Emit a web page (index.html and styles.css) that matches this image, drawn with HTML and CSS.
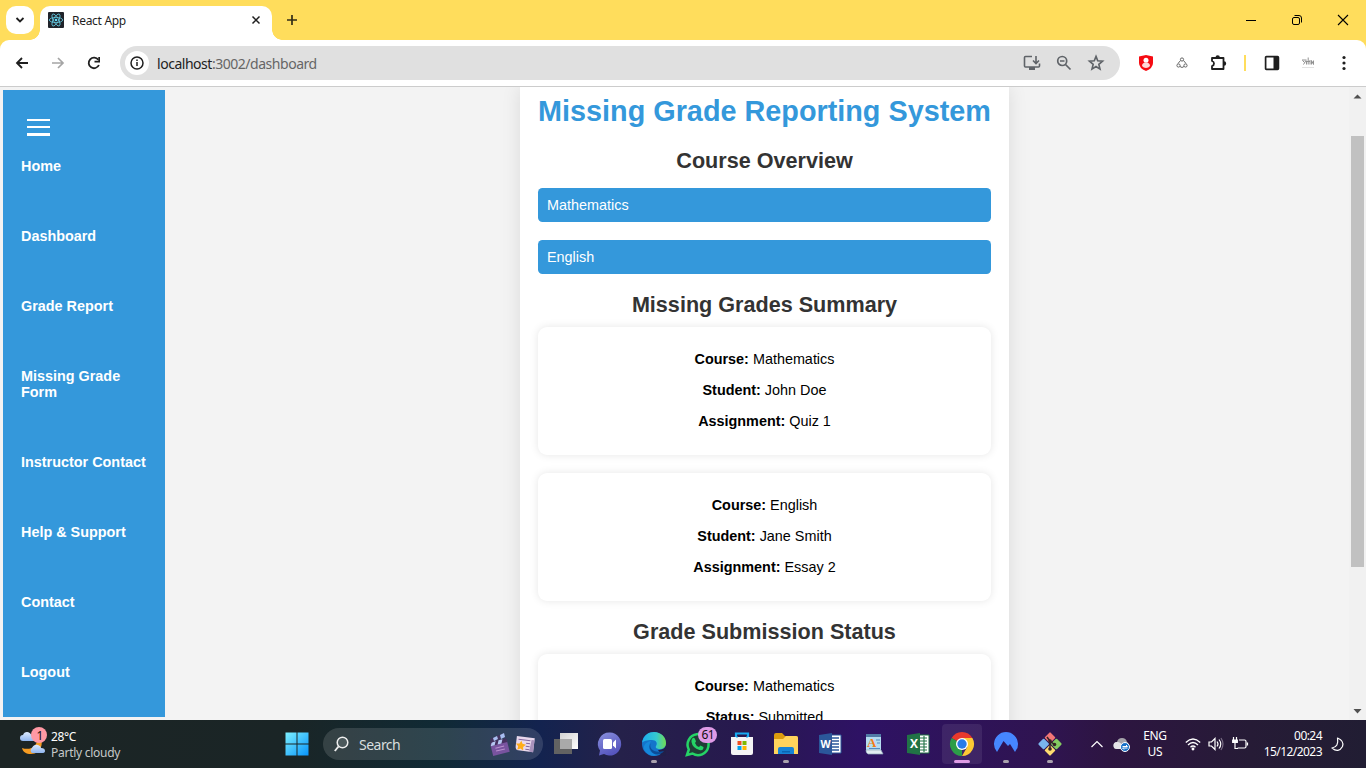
FILE: index.html
```html
<!DOCTYPE html>
<html lang="en">
<head>
<meta charset="utf-8">
<title>React App</title>
<link rel="stylesheet" href="styles.css">
</head>
<body>
<header class="tabstrip">
  <button class="tab-search"><svg width="10" height="10" viewBox="0 0 10 10"><path d="M1.500 3 5 6.500 8.500 3" fill="none" stroke="#1f1f1f" stroke-width="1.800"/></svg></button>
  <div class="tab">
    <svg class="favicon" width="16" height="16" viewBox="0 0 16 16"><rect width="16" height="16" rx="1" fill="#20232a"/><g fill="none" stroke="#61c5dc" stroke-width=".85"><ellipse cx="8" cy="8" rx="6.700" ry="2.600"/><ellipse cx="8" cy="8" rx="6.700" ry="2.600" transform="rotate(60 8 8)"/><ellipse cx="8" cy="8" rx="6.700" ry="2.600" transform="rotate(120 8 8)"/></g><circle cx="8" cy="8" r="1.300" fill="#61dafb"/></svg>
    <span class="tab-title">React App</span>
    <svg class="tab-close" width="10" height="10" viewBox="0 0 10 10"><path d="M1.500 1.500l7 7M8.500 1.500l-7 7" stroke="#1f1f1f" stroke-width="1.500"/></svg>
  </div>
  <svg class="new-tab" width="12" height="12" viewBox="0 0 12 12"><path d="M6 1v10M1 6h10" stroke="#332d16" stroke-width="1.700"/></svg>
  <div class="window-controls">
    <span><svg width="12" height="12" viewBox="0 0 12 12"><path d="M1 6.500h10" stroke="#000"/></svg></span>
    <span><svg width="12" height="12" viewBox="0 0 12 12" fill="none" stroke="#000"><rect x="1.500" y="3.500" width="7" height="7" rx="1.500"/><path d="M3.500 1.500H8a2.500 2.500 0 0 1 2.500 2.500v4.500"/></svg></span>
    <span><svg width="12" height="12" viewBox="0 0 12 12"><path d="M1 1l10 10M11 1 1 11" stroke="#000" stroke-width="1.100"/></svg></span>
  </div>
</header>

<div class="toolbar-wrap"><nav class="toolbar">
  <span class="slot"><svg width="16" height="16" viewBox="0 0 16 16"><path d="M14 8H3M8 3 3 8l5 5" fill="none" stroke="#1f1f1f" stroke-width="1.800"/></svg></span>
  <span class="slot"><svg width="16" height="16" viewBox="0 0 16 16"><path d="M2 8h11M8 3l5 5-5 5" fill="none" stroke="#a5a5a5" stroke-width="1.700"/></svg></span>
  <span class="slot"><svg width="16" height="16" viewBox="0 0 16 16"><path d="M12.900 10A5.300 5.300 0 1 1 12.300 4.800" fill="none" stroke="#1f1f1f" stroke-width="1.800"/><path d="M14 2v5.500H8.500V5.800h3.800V2z" fill="#1f1f1f"/></svg></span>
  <div class="omnibox">
    <span class="site-info"><svg width="16" height="16" viewBox="0 0 16 16"><circle cx="8" cy="8" r="6" fill="none" stroke="#1f1f1f" stroke-width="1.500"/><path d="M8 7v4M8 4.500v1.500" stroke="#1f1f1f" stroke-width="1.500"/></svg></span>
    <span class="url"><b>localhost</b>:3002/dashboard</span>
    <span class="omni-icon"><svg width="18" height="16" viewBox="0 0 18 16"><path d="M9 1.500H2.500Q1.500 1.500 1.500 2.500v8.500q0 1 1 1h13q1 0 1-1V8.500" fill="none" stroke="#5f6368" stroke-width="1.600"/><path d="M6 12h6v3H6z" fill="#5f6368"/><path d="M13 1v7M10 5.500l3 3 3-3" fill="none" stroke="#5f6368" stroke-width="1.600"/></svg></span>
    <span class="omni-icon"><svg width="16" height="16" viewBox="0 0 16 16"><g fill="none" stroke="#5f6368" stroke-width="1.700"><circle cx="6.200" cy="6" r="4.500"/><path d="M4 6h4.500M9.500 9.500l5 5"/></g></svg></span>
    <span class="omni-icon"><svg width="18" height="18" viewBox="0 0 24 24"><path d="M12 3.200l2.300 5.900 6.400.5-4.900 4.200 1.500 6.300-5.300-3.400-5.300 3.400 1.500-6.300-4.900-4.200 6.400-.5z" fill="none" stroke="#5f6368" stroke-width="2.200"/></svg></span>
  </div>
  <span class="slot"><svg width="16" height="18" viewBox="0 0 16 18"><path d="M8 1l7 1.500V9q0 5-7 8-7-3-7-8V2.500z" fill="#f60b12"/><circle cx="8" cy="6.300" r="2.500" fill="#fff"/><path d="M4 12q0-3.500 4-3.500t4 3.500q-1.500 2-4 2t-4-2" fill="#ffd8d8"/></svg></span>
  <span class="slot"><svg width="12" height="12" viewBox="0 0 12 12" fill="none" stroke="#666"><circle cx="6" cy="2.500" r="1.600"/><circle cx="2.500" cy="8.500" r="1.600"/><circle cx="9.500" cy="8.500" r="1.600"/><path d="M4.500 3.500 2 6.500M7.500 3.500l2.500 3M4 9.500Q6 11.500 8 9.500"/></svg></span>
  <span class="slot"><svg width="18" height="18" viewBox="0 0 18 18"><path d="M3 4h11.500v11H3V12Q5 11.500 5 9.500T3 7z" fill="none" stroke="#1f1f1f" stroke-width="1.800" stroke-linejoin="round"/><path d="M6.500 3.500a2.200 2.200 0 0 1 4.400 0zM15 7.300a2.200 2.200 0 0 1 0 4.400z" fill="#1f1f1f"/></svg></span>
  <span class="divider"></span>
  <span class="slot"><svg width="16" height="16" viewBox="0 0 16 16"><rect x="1.600" y="1.600" width="12.800" height="12.800" rx=".8" fill="#fff" stroke="#1f1f1f" stroke-width="1.700"/><path d="M9.500 1.500H14v13H9.500z" fill="#1f1f1f"/></svg></span>
  <span class="slot"><svg width="14" height="12" viewBox="0 0 14 12"><path d="M1 3h4.500M1.500 3.500l2 2M5 3.500 2.500 7.500M5.500 4v3.500M7.200 .5v7M5.500 4.500H9M9 3v4.500M10.500 7.500v-4l2 4v-4" fill="none" stroke="#929292"/><path d="M1 10.500h12" stroke="#e3e3e3"/></svg></span>
  <span class="slot"><svg width="4" height="16" viewBox="0 0 4 16" fill="#1f1f1f"><circle cx="2" cy="2.500" r="1.600"/><circle cx="2" cy="8" r="1.600"/><circle cx="2" cy="13.500" r="1.600"/></svg></span>
</nav></div>

<main class="viewport">
  <aside class="sidebar">
    <div class="hamburger"><i></i><i></i><i></i></div>
    <ul class="menu">
      <li>Home</li><li>Dashboard</li><li>Grade Report</li><li>Missing Grade Form</li><li>Instructor Contact</li><li>Help &amp; Support</li><li>Contact</li><li>Logout</li>
    </ul>
  </aside>
  <div class="page">
    <section class="dashboard">
      <h1>Missing Grade Reporting System</h1>
      <h2>Course Overview</h2>
      <div class="course">Mathematics</div>
      <div class="course">English</div>
      <h2>Missing Grades Summary</h2>
      <div class="card"><p><b>Course:</b> Mathematics</p><p><b>Student:</b> John Doe</p><p><b>Assignment:</b> Quiz 1</p></div>
      <div class="card"><p><b>Course:</b> English</p><p><b>Student:</b> Jane Smith</p><p><b>Assignment:</b> Essay 2</p></div>
      <h2>Grade Submission Status</h2>
      <div class="card"><p><b>Course:</b> Mathematics</p><p><b>Status:</b> Submitted</p></div>
    </section>
  </div>
  <div class="scrollbar">
    <svg width="9" height="5" viewBox="0 0 9 5"><path d="M.5 4.500 4.500.5l4 4z" fill="#505050"/></svg>
    <span class="thumb"></span>
    <svg width="9" height="5" viewBox="0 0 9 5"><path d="M.5 0l4 4.500 4-4.500z" fill="#505050"/></svg>
  </div>
</main>

<footer class="taskbar">
  <div class="weather">
    <svg width="30" height="30" viewBox="0 0 30 30"><defs><linearGradient id="cl" x2="0" y2="1"><stop stop-color="#dceaff"/><stop offset="1" stop-color="#8fb5ef"/></linearGradient></defs><path d="M20 9c7 4 4 18-7 18-5 0-8-2-9-6 9 3 16-2 16-12z" fill="#f69c22"/><path d="M5 14a3 3 0 0 1 0-6q1-3 4-3t5 4q3 1 2 5z" fill="url(#cl)"/><path d="M14 26a3 3 0 0 1 0-5q2-4 6-3 3 1 3 3 4 0 4 3 0 2-3 2z" fill="url(#cl)"/><circle cx="21" cy="8" r="8" fill="#ff99a4"/><text x="18.500" y="12.500" class="badge-text">1</text></svg>
    <div class="weather-text"><span>28°C</span><span class="dim">Partly cloudy</span></div>
  </div>
  <span class="start"><svg width="24" height="24" viewBox="0 0 24 24"><defs><linearGradient id="win" x2="1" y2="1"><stop stop-color="#7df0ff"/><stop offset="1" stop-color="#0794fb"/></linearGradient></defs><path d="M.5.5h11v11H.5zM12.500.5h11v11h-11zM.5 12.500h11v11H.5zM12.500 12.500h11v11h-11z" fill="url(#win)"/></svg></span>
  <div class="search">
    <svg width="16" height="16" viewBox="0 0 16 16"><circle cx="8.500" cy="6.500" r="5.300" fill="#4c595c" stroke="#eee" stroke-width="1.500"/><path d="M4.500 10.500 .8 15" stroke="#eee" stroke-width="1.900"/></svg>
    <span>Search</span>
    <svg class="search-art" width="46" height="24" viewBox="0 0 46 24"><g transform="rotate(-14 11 14)"><path d="M2 10h17v12H2z" fill="#78539f"/><path d="M2 8h17v4H2z" fill="#45305f"/><path d="M4 8h4l-2 4H2zM11 8h4l-2 4H9z" fill="#b6c7f2"/><path d="M6 15h9M6 18h9" stroke="#b990cf"/></g><path d="M1 7 15 1l1 4L2 11z" fill="#44345f"/><path d="M4 6l4-2 1 3-4 2zM11 3l4-2 1 4-4 2z" fill="#a8bff1"/><g transform="rotate(7 35 12)"><path d="M27 5h18v14H30q-3 0-3-4z" fill="#e9d8ed"/><path d="M42 7h3v12h-4z" fill="#a891bb"/><path d="M29 8h12M37 11h4M37 14h4M37 17h4" stroke="#82669e"/><path d="M32 9l1.500 3 3.500.5-2.500 2.500.5 3.500-3-1.500-3 1.500.5-3.500-2.500-2.500 3.500-.5z" fill="#ffad19"/></g></svg>
  </div>
  <div class="apps">
    <span class="app"><svg width="24" height="24" viewBox="0 0 24 24"><defs><linearGradient id="tv" x2="1" y2="1"><stop stop-color="#d2d2d2"/><stop offset="1" stop-color="#fff"/></linearGradient></defs><path d="M0 7h18v15H0z" fill="#626262"/><path d="M6 1h18v16H6z" fill="url(#tv)"/><path d="M6 7h12v10H6z" fill="#a9a9a9"/></svg></span>
    <span class="app"><svg width="24" height="24" viewBox="0 0 24 24"><defs><linearGradient id="chat" x2=".5" y2="1"><stop stop-color="#8990dd"/><stop offset="1" stop-color="#5655be"/></linearGradient></defs><path d="M12 .500a11.500 11.500 0 1 1-6 21.500L1 23.500l1-5A11.500 11.500 0 0 1 12 .500z" fill="url(#chat)"/><rect x="5" y="7" width="9" height="10" rx="1.500" fill="#fff"/><path d="M15 10.500l3-3v9l-3-3z" fill="#fff"/></svg></span>
    <span class="app running"><svg width="24" height="24" viewBox="0 0 24 24"><defs><linearGradient id="ed" x2="1"><stop stop-color="#1cadef"/><stop offset=".6" stop-color="#35c9d0"/><stop offset="1" stop-color="#72dc50"/></linearGradient></defs><circle cx="12" cy="12" r="12" fill="#1474cb"/><path d="M24 11c0 5-3 7-8 7l4 6h4z" fill="#221f49"/><path d="M0 11C1 3 7 0 12 0c7 0 12 5 12 11 0 4-3 6-6 6-3 0-5-1-4-3 2-3 0-6-4-6-5 0-9 1-10 3z" fill="url(#ed)"/><path d="M8 11c-3 6 2 13 10 11-5 3-12 2-15-3-3-4 0-9 6-10z" fill="#1688db"/><path d="M9 11c-3 5 3 11 13 8-3 4-10 5-13 0-2-3-2-6 0-8z" fill="#0b4d98"/></svg></span>
    <span class="app"><svg width="34" height="34" viewBox="0 0 34 34"><path d="M6 28l1.800-5.500A10.500 10.500 0 1 1 11.500 26.500z" fill="#203e36" stroke="#25d366" stroke-width="2.500"/><path d="M11 12q2-3 3.500 1l.5 1.500-1 1.500q1 3 4 4l1.500-1.500 3 1.500q0 4-4 3-7-2-8-8-.2-2 .5-3z" fill="#25d366"/><rect x="17" y="0" width="19" height="16" rx="8" fill="#df9be6"/><text x="20.500" y="12.300" class="badge-text">61</text></svg></span>
    <span class="app"><svg width="24" height="24" viewBox="0 0 24 24"><path d="M6 6V1.500h12V6" fill="none" stroke="#18aaf1" stroke-width="2.200"/><path d="M1 5h22v16q0 2-2 2H3q-2 0-2-2z" fill="#f4f4f5"/><path d="M6 5h12" stroke="#18aaf1" stroke-width="1" stroke-dasharray="2 8"/><path d="M7.500 9h4v4h-4z" fill="#f05022"/><path d="M12.500 9h4v4h-4z" fill="#7eb900"/><path d="M7.500 14h4v4h-4z" fill="#00a3ee"/><path d="M12.500 14h4v4h-4z" fill="#ffb800"/></svg></span>
    <span class="app running"><svg width="24" height="24" viewBox="0 0 24 24"><path d="M0 3q0-2 2-2h6l3 3h11q2 0 2 2v8H0z" fill="#dc9b0d"/><path d="M0 7h9l3-3h10q2 0 2 2v16H0z" fill="#ffd35c"/><path d="M4 22v-5q0-2 2-2h12q2 0 2 2v5z" fill="#1683d6"/><path d="M8 20.500v-1.500h8v1.500z" fill="#0b63b2"/></svg></span>
    <span class="app"><svg width="24" height="24" viewBox="0 0 24 24"><path d="M12 3h11v18H12z" fill="#fff" stroke="#2b579a"/><path d="M14 6h7M14 9h7M14 12h7M14 15h7M14 18h7" stroke="#2b579a" stroke-width="1.300"/><path d="M1 3l13-2v22L1 21z" fill="#2b579a"/><text x="2.500" y="15.500" class="word-letter">W</text></svg></span>
    <span class="app"><svg width="20" height="24" viewBox="0 0 20 24"><path d="M2 2h15v18H2z" fill="#b5dcf0"/><path d="M2 2h15v3H2z" fill="#517ba6"/><path d="M2 18h15l2 4H4q-2-1-2-4z" fill="#e2edf2" stroke="#92adbd" stroke-width=".7"/><text x="3" y="14.500" class="pad-letter">A</text><path d="M12 8h4M13 11h3M5 16.500h11" stroke="#558ac0"/></svg></span>
    <span class="app"><svg width="24" height="24" viewBox="0 0 24 24"><path d="M12 3h11v18H12z" fill="#fff" stroke="#217346"/><path d="M14 6h7M14 9h7M14 12h7M14 15h7M14 18h7M18 4v16" stroke="#217346" stroke-width="1.100"/><path d="M1 3l13-2v22L1 21z" fill="#217346"/><text x="4" y="16" class="excel-letter">X</text></svg></span>
    <span class="app running active"><svg width="24" height="24" viewBox="0 0 24 24"><path d="M12 12 1.600 6A12 12 0 0 1 22.400 6z" fill="#e8392c"/><path d="M12 12v12A12 12 0 0 1 1.600 6z" fill="#2c9d48"/><path d="M12 6h10.400A12 12 0 0 1 12 24l5.200-9z" fill="#fcc934"/><circle cx="12" cy="12" r="6" fill="#fff"/><circle cx="12" cy="12" r="4.700" fill="#287be9"/></svg></span>
    <span class="app running"><svg width="24" height="24" viewBox="0 0 24 24"><path d="M3 20A12 12 0 1 1 21 20l-5-8-2 2-4.500-5L3 20z" fill="#4687ff"/></svg></span>
    <span class="app running"><svg width="24" height="24" viewBox="0 0 24 24"><g transform="rotate(45 12 12)"><rect x="3.500" y="3.500" width="8" height="8" rx="1" fill="#f27676"/><rect x="12.500" y="3.500" width="8" height="8" rx="1" fill="#84ca61"/><rect x="3.500" y="12.500" width="8" height="8" rx="1" fill="#79b5ed"/><rect x="12.500" y="12.500" width="8" height="8" rx="1" fill="#ffdc70"/></g><path d="M9 5l3 4v9M12 9l5 4" stroke="#352226" stroke-width="1.500" fill="none"/><circle cx="12" cy="9" r="1.800" fill="#352226"/><circle cx="12" cy="17" r="1.800" fill="#352226"/><circle cx="16.500" cy="12.500" r="1.800" fill="#352226"/></svg></span>
  </div>
  <div class="tray">
    <svg class="chevron" width="12" height="8" viewBox="0 0 12 8"><path d="M.5 7 6 1.500 11.500 7" fill="none" stroke="#fff" stroke-width="1.200"/></svg>
    <svg class="cloud" width="18" height="15" viewBox="0 0 18 15"><path d="M4 12a3.500 3.500 0 0 1 0-7q1-4 5-4 4 0 5 4 3 2 2 6z" fill="#a5a4aa"/><path d="M4 12a3.500 3.500 0 0 1 0-7q4-1 8 7z" fill="#e5e5e8"/><circle cx="12" cy="10" r="4.500" fill="#1772c8" stroke="#fff"/><path d="M9.500 9.500h5l-1.500-1.500M14.500 11h-5l1.500 1.500" fill="none" stroke="#fff"/></svg>
    <div class="lang"><span>ENG</span><span>US</span></div>
    <svg class="wifi" width="16" height="14" viewBox="0 0 16 14" fill="none" stroke="#fff" stroke-width="1.300"><path d="M.8 5.500q7.200-7 14.400 0M3 8q5-5 10 0M5.500 10.300q2.500-2.500 5 0"/><circle cx="8" cy="12" r=".8" fill="#fff"/></svg>
    <svg class="volume" width="16" height="14" viewBox="0 0 16 14" fill="none" stroke="#fff" stroke-width="1.200"><path d="M1 5h2.500L7 1.500v11L3.500 9H1zM9 4.500q2 2.500 0 5M11 2.500q3.500 4.500 0 9"/><path d="M13 1q4 6 0 12" stroke="#796d84"/></svg>
    <svg class="battery" width="17" height="14" viewBox="0 0 17 14" fill="none" stroke="#fff" stroke-width="1.200"><path d="M7 3h5.500Q14 3 14 4.500v5q0 1.500-1.500 1.500H5.500M15.500 5.500v3M1.500 0v3M4.500 0v3M3 6v5.500h3"/><path d="M.7 3h4.600v2.500H.7z" fill="#fff"/></svg>
    <div class="clock"><span>00:24</span><span>15/12/2023</span></div>
    <svg class="moon" width="13" height="15" viewBox="0 0 13 15"><path d="M6.500 1q7 3 5 8.500-4 7-10.500 1.500 7-1 5.500-10z" fill="none" stroke="#fff" stroke-width="1.200" stroke-linejoin="round"/></svg>
  </div>
</footer>
</body>
</html>
```
FILE: styles.css
```css
* { box-sizing: border-box; }
body { margin: 0; width: 1366px; height: 768px; overflow: hidden; display: flex; flex-direction: column; font-family: "Liberation Sans", Arial, sans-serif; }
svg { display: block; flex: none; overflow: visible; }

.tabstrip { height: 40px; flex: none; display: flex; background: #ffdd5c; font-family: "Noto Sans", sans-serif; }
.tab-search { width: 28px; height: 28px; margin: 6px 6px 0; padding: 0; border: 0; border-radius: 10px; background: #fff; display: grid; place-items: center; }
.tab { position: relative; width: 232px; height: 34px; margin-top: 6px; padding: 0 11px 6px 8px; display: flex; align-items: center; background: #fff; border-radius: 10px 10px 0 0; }
.tab::before, .tab::after { content: ""; position: absolute; bottom: 0; width: 10px; height: 10px; }
.tab::before { left: -10px; background: radial-gradient(circle at 0 0, transparent 9.500px, #fff 10px); }
.tab::after { right: -10px; background: radial-gradient(circle at 100% 0, transparent 9.500px, #fff 10px); }
.tab-title { margin: 1px 0 0 8px; flex: 1; font-size: 12px; letter-spacing: -.3px; color: #1f1f1f; }
.new-tab { margin: 14px 0 0 14px; }
.window-controls { margin-left: auto; display: flex; height: 40px; }
.window-controls span { width: 46px; display: grid; place-items: center; }

.toolbar-wrap { height: 47px; flex: none; background: #ffdd5c; }
.toolbar { height: 47px; padding: 0 4px; display: flex; align-items: center; background: #fff; border-radius: 9px 9px 0 0; border-bottom: 1px solid #ccc; }
.slot { width: 36px; flex: none; display: grid; place-items: center; }
.divider { width: 18px; flex: none; height: 16px; background: linear-gradient(#ffdd5c, #ffdd5c) center / 2px 16px no-repeat; }
.omnibox { width: 1000px; height: 34px; margin: 0 8px; padding: 0 8px 0 5px; display: flex; align-items: center; flex: none; background: #e0e0e0; border-radius: 17px; font-family: "Noto Sans", sans-serif; font-size: 14px; color: #666; }
.site-info { width: 24px; height: 24px; border-radius: 50%; background: #fff; display: grid; place-items: center; }
.url { margin-left: 8px; flex: 1; letter-spacing: -.47px; }
.url b { font-weight: 400; color: #222; }
.omni-icon { width: 32px; display: grid; place-items: center; }

.viewport { height: 633px; flex: none; overflow: hidden; display: flex; background: #f3f3f3; }
.sidebar { width: 162px; height: 627px; margin: 3px 0 0 3px; flex: none; padding: 29px 18px 0; background: #3498db; color: #fff; }
.hamburger { width: 23px; margin-left: 6px; display: flex; flex-direction: column; gap: 5px; }
.hamburger i { height: 2px; background: #fff; }
.hamburger i:last-child { height: 3px; }
.menu { margin: 22px 0 0; padding: 0; list-style: none; font-size: 14.400px; font-weight: 700; line-height: 16px; width: 130px; }
.menu li { margin-bottom: 54px; }
.page { width: 1184px; flex: none; padding-left: 355px; }
.dashboard { width: 489px; height: 900px; padding: 8px 18px 7px; background: #fff; text-align: center; box-shadow: 0 0 18px rgba(0, 0, 0, .1); font-size: 14.400px; }
.dashboard h1 { margin: 0 0 20px; font-size: 28.800px; line-height: 33px; color: #3498db; white-space: nowrap; }
.dashboard h2 { margin: 0 0 10px; font-size: 21.600px; line-height: 25px; color: #333; }
.course { height: 34px; margin-bottom: 18px; padding: 0 9px; line-height: 34px; text-align: left; color: #fff; background: #3498db; border-radius: 4.500px; }
.dashboard h2:first-of-type { margin-bottom: 15px; }
.card { height: 128px; margin-bottom: 18px; padding: 24px 18px; border-radius: 9px; background: #fff; box-shadow: 0 0 9px rgba(0, 0, 0, .1); color: #000; }
.card p { margin: 0 0 15px; line-height: 16px; }
.scrollbar { width: 17px; flex: none; padding: 7px 0 6px; display: flex; flex-direction: column; align-items: center; background: #f1f1f1; }
.scrollbar .thumb { width: 13px; height: 431px; margin: 37px 0 auto; background: #c1c1c1; }

.taskbar { height: 48px; flex: none; display: flex; color: #fff; font-family: "Noto Sans", sans-serif; font-size: 12px; background: linear-gradient(90deg, #1c2525 0, #1a2526 290px, #102a35 440px, #13234f 540px, #25214a 620px, #27194e 740px, #2e1264 860px, #2f1450 1050px, #2d1541 1110px, #261b36 1250px, #211d33 1366px); }
.weather { width: 275px; padding: 7px 0 0 18px; display: flex; gap: 3px; }
.weather-text { display: flex; flex-direction: column; line-height: 16px; padding-top: 2px; letter-spacing: -.4px; }
.dim { color: #c6c9c9; letter-spacing: -.27px; }
.badge-text { font: 12px "Noto Sans", sans-serif; fill: #111; letter-spacing: -.6px; }
.start { width: 44px; display: grid; place-items: center; }
.search { width: 220px; height: 32px; margin: 8px 1px 0 4px; padding: 0 8px 0 11px; display: flex; align-items: center; border-radius: 16px; background: rgba(255, 255, 255, .13); font-size: 14px; letter-spacing: -.52px; color: #d9dedf; }
.search span { margin-left: 9px; }
.search-art { margin-left: auto; }
.apps { display: flex; flex: none; }
.app { position: relative; width: 44px; height: 48px; display: grid; place-items: center; }
.app.running::after { content: ""; position: absolute; bottom: 5px; left: 19px; width: 6px; height: 3px; border-radius: 2px; background: #aaa2ae; }
.app.active::before { content: ""; position: absolute; left: 2px; top: 4px; width: 40px; height: 40px; border-radius: 4px; background: rgba(255, 255, 255, .08); }
.app.active svg { position: relative; }
.app.active::after { left: 14px; width: 16px; background: #df9be6; }
.word-letter { font: 700 10.500px "Open Sans", sans-serif; fill: #fff; }
.excel-letter { font: 700 12px "Open Sans", sans-serif; fill: #fff; }
.pad-letter { font: 700 13px "Liberation Serif", serif; fill: #f37b16; }
.tray { display: flex; align-items: center; margin-left: 19px; }
.cloud { margin-left: 10px; }
.lang, .clock { display: flex; flex-direction: column; line-height: 16px; }
.lang { width: 28px; margin: 0 0 0 10px; text-align: center; letter-spacing: -.3px; }
.wifi { margin-left: 16px; }
.volume { margin-left: 7px; }
.battery { margin-left: 8px; }
.clock { width: 64px; margin-left: 9px; text-align: right; letter-spacing: -.55px; align-items: flex-end; }
.moon { margin-left: 9px; }
```
